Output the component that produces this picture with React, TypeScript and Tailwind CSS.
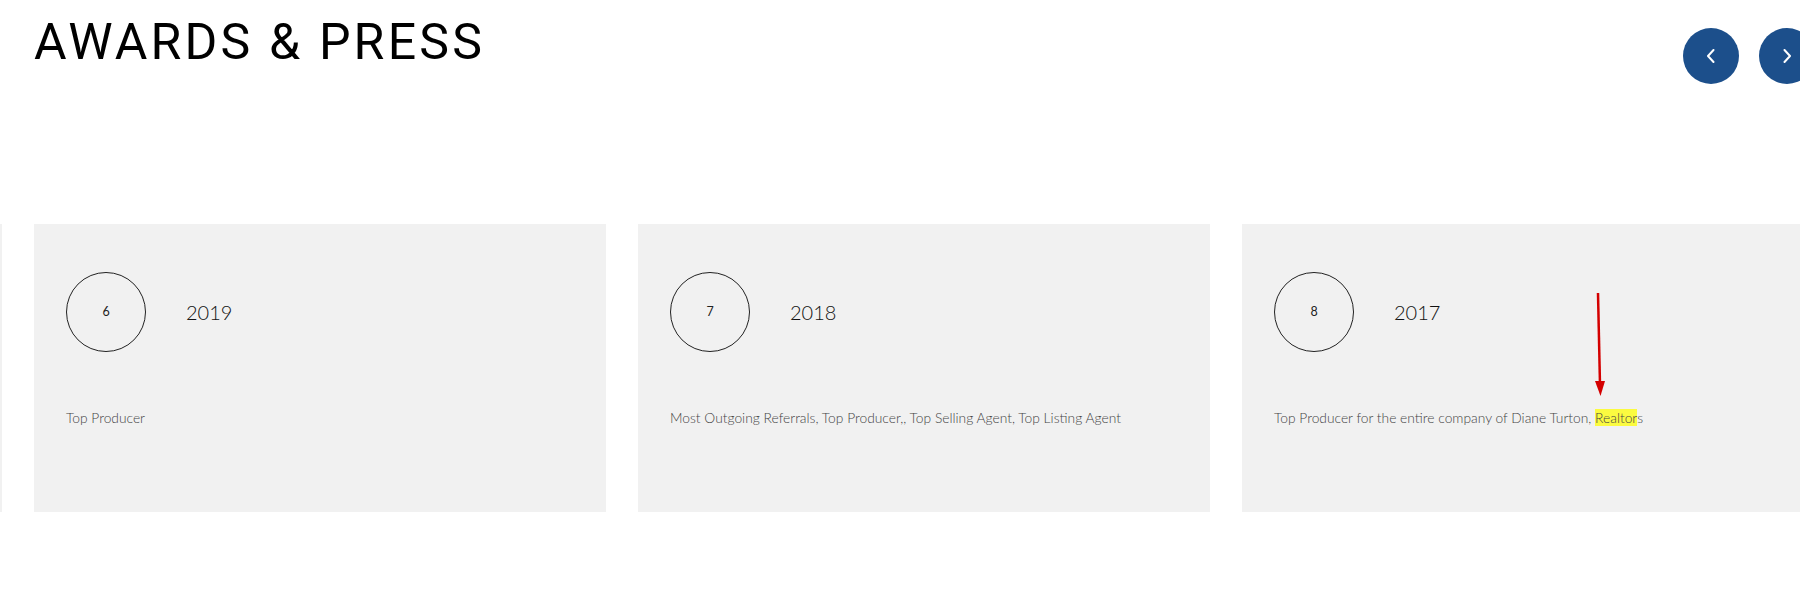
const awards = [
  { n: 5, year: "2020", text: "Top Producer" },
  { n: 6, year: "2019", text: "Top Producer" },
  {
    n: 7,
    year: "2018",
    text: "Most Outgoing Referrals, Top Producer,, Top Selling Agent, Top Listing Agent",
  },
  { n: 8, year: "2017", text: "Top Producer for the entire company of Diane Turton, ", mark: "Realtor", tail: "s" },
];

const Chevron = ({ dir }: { dir: "left" | "right" }) => (
  <svg width="10" height="14" viewBox="0 0 10 14" fill="none">
    <polyline
      points={dir === "left" ? "7.5,1 2,7 7.5,13" : "2.5,1 8,7 2.5,13"}
      stroke="white"
      strokeWidth="2"
      strokeLinecap="round"
      strokeLinejoin="round"
    />
  </svg>
);

const NavButton = ({ dir }: { dir: "left" | "right" }) => (
  <button className="w-14 h-14 rounded-full bg-[#1c4f8b] flex items-center justify-center shrink-0">
    <Chevron dir={dir} />
  </button>
);

type Award = (typeof awards)[number];

const AwardCard = ({ item }: { item: Award }) => {
  return (
    <div className="relative w-[572px] h-[288px] shrink-0 bg-[#f1f1f1] pl-8 pt-12">
      <div className="flex items-center gap-10">
        <div className="w-20 h-20 rounded-full border border-[#222] flex items-center justify-center text-[12.5px] text-[#222]">
          {item.n}
        </div>
        <span className="text-[20px] font-light text-[#111]">{item.year}</span>
      </div>
      <p className="mt-14 text-[13.8px] leading-5 font-light text-[#444]">
        {item.text}
        {item.mark && <span className="bg-[#fbfb40]">{item.mark}</span>}
        {item.tail}
      </p>
      {item.mark && (
        <svg
          className="absolute left-[352px] top-[69px]"
          width="16"
          height="108"
          viewBox="0 0 16 108"
          fill="none"
        >
          <line x1="4" y1="0" x2="6" y2="92" stroke="#d40000" strokeWidth="2.5" />
          <polygon points="1,88 11,88 6.5,103" fill="#d40000" />
        </svg>
      )}
    </div>
  );
};

export default function App() {
  return (
    <div className="w-[1800px] h-[596px] overflow-hidden bg-white font-['Lato','Liberation_Sans',sans-serif]">
      <div className="flex items-start justify-between pl-[34px]">
        <h1 className="mt-[17px] text-[50px] leading-[50px] tracking-[3.2px] text-black font-['Roboto','Liberation_Sans',sans-serif]">
          AWARDS &amp; PRESS
        </h1>
        <div className="flex gap-5 mt-7 mr-[-15px]">
          <NavButton dir="left" />
          <NavButton dir="right" />
        </div>
      </div>
      <div className="flex gap-8 mt-[140px] ml-[-570px]">
        {awards.map((a) => (
          <AwardCard key={a.n} item={a} />
        ))}
      </div>
    </div>
  );
}
